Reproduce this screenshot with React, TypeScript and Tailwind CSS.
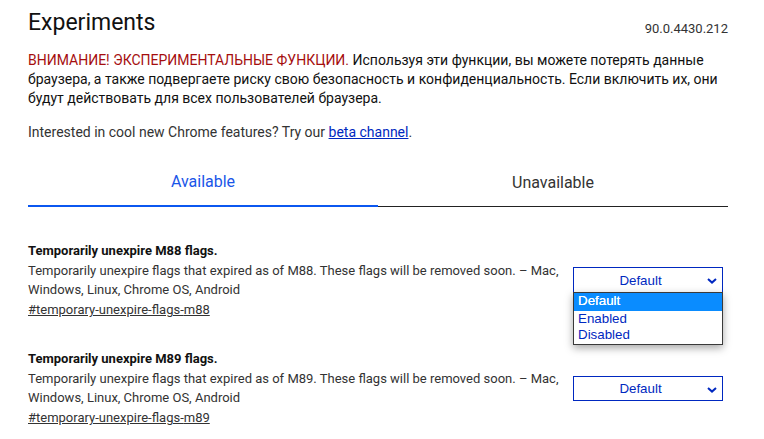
type FlagRowProps = {
  version: string;
  open?: boolean;
  selectTop: string;
  selectHeight: string;
};

function FlagSelect({ open = false, height }: { open?: boolean; height: string }) {
  return (
    <div className="relative w-[150px] shrink-0">
      <div className={`relative flex items-center justify-center border border-[#0028c0] bg-white pt-[1px] pr-[15px] text-[13.33px] text-[#0028c0] font-['Liberation_Sans',sans-serif] ${height}`}>
        Default
        <svg className="absolute right-[5px] top-[10px] h-[6px] w-[10px]" viewBox="0 0 10 6" fill="none">
          <path d="M1 1l4 3.6L9 1" stroke="#0028c0" strokeWidth="2" />
        </svg>
      </div>
      {open && (
        <div className="absolute left-0 top-[25px] z-10 w-[150px] border border-[#3a3a3a] bg-white text-[13.33px] leading-[16px] text-[#0028c0] font-['Liberation_Sans',sans-serif] shadow-[0_3px_8px_rgba(0,0,0,0.35)]">
          <div className="h-[18px] bg-[#0a8cff] pl-[4px] font-medium text-white [text-shadow:0_0_0.6px_white]">Default</div>
          <div className="pl-[4px]">Enabled</div>
          <div className="pl-[4px] pb-[1px]">Disabled</div>
        </div>
      )}
    </div>
  );
}

function FlagRow({ version, open, selectTop, selectHeight }: FlagRowProps) {
  const lower = version.toLowerCase();
  return (
    <div className="flex items-start justify-between pr-[5px]">
      <div className="w-[536px]">
        <h2 className="text-[13px] leading-[20px] font-bold text-[#111]">
          Temporarily unexpire {version} flags.
        </h2>
        <p className="text-[13px] leading-[19px] text-[#333]">
          Temporarily unexpire flags that expired as of {version}. These flags will be removed soon. – Mac, Windows, Linux, Chrome OS, Android
        </p>
        <a className="mt-[2px] block text-[13px] leading-[18px] text-[#333] underline">
          #temporary-unexpire-flags-{lower}
        </a>
      </div>
      <div className={selectTop}>
        <FlagSelect open={open} height={selectHeight} />
      </div>
    </div>
  );
}

export default function App() {
  return (
    <div className="h-[439px] w-[764px] overflow-hidden bg-white pl-[28px] pr-[36px] font-['Roboto',sans-serif]">
      <div className="flex items-end justify-between pt-[9px]">
        <h1 className="text-[23px] leading-[28px] font-normal text-[#111]">Experiments</h1>
        <span className="relative top-[1px] text-[13px] leading-[18px] text-[#333]">90.0.4430.212</span>
      </div>
      <p className="mt-[14px] text-[14px] leading-[19px] text-[#111]">
        <span className="text-[#a50e0e]">ВНИМАНИЕ! ЭКСПЕРИМЕНТАЛЬНЫЕ ФУНКЦИИ.</span> Используя эти функции, вы можете потерять данные браузера, а также подвергаете риску свою безопасность и конфиденциальность. Если включить их, они будут действовать для всех пользователей браузера.
      </p>
      <p className="mt-[14px] text-[14px] leading-[20px] text-[#333]">
        Interested in cool new Chrome features? Try our <a className="text-[#0028c0] underline">beta channel</a>.
      </p>
      <div className="mt-[19px] flex">
        <div className="flex h-[46px] w-1/2 items-center justify-center border-b-2 border-[#0b57f0] pb-[2px] text-[16px] text-[#1a56e8]">
          Available
        </div>
        <div className="flex h-[46px] w-1/2 items-center justify-center border-b border-[#222] pb-[2px] text-[16px] text-[#333]">
          Unavailable
        </div>
      </div>
      <div className="mt-[34px]">
        <FlagRow version="M88" open selectTop="pt-[26px]" selectHeight="h-[26px]" />
        <div className="mt-[30px]">
          <FlagRow version="M89" selectTop="pt-[27px]" selectHeight="h-[25px]" />
        </div>
      </div>
    </div>
  );
}
